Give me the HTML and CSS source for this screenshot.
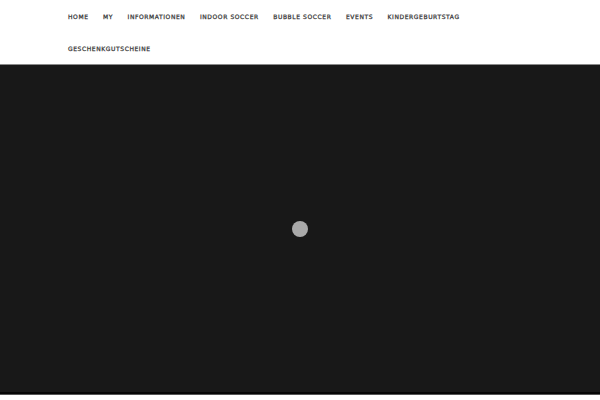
FILE: index.html
```
<!DOCTYPE html>
<html>
<head>
<meta charset="utf-8">
<link rel="stylesheet" href="styles.css">
</head>
<body>
<header class="header">
  <nav class="nav">
    <a class="nav-item">Home</a>
    <a class="nav-item">My</a>
    <a class="nav-item">Informationen</a>
    <a class="nav-item">Indoor Soccer</a>
    <a class="nav-item">Bubble Soccer</a>
    <a class="nav-item">Events</a>
    <a class="nav-item">Kindergeburtstag</a>
    <a class="nav-item">Geschenkgutscheine</a>
  </nav>
</header>
<main class="stage">
  <div class="spinner"></div>
</main>
<div class="footer-line"></div>
</body>
</html>
```
FILE: styles.css
```
html, body {
  margin: 0;
  padding: 0;
  background: #fff;
}
body {
  font-family: "DejaVu Sans", sans-serif;
}
.header {
  box-sizing: border-box;
  height: 65px;
  background: #fff;
  border-bottom: 1px solid #8a8a8a;
}
.nav {
  display: flex;
  flex-wrap: wrap;
  padding: 1px 80px 0 68px;
}
.nav-item {
  display: block;
  height: 32px;
  line-height: 32px;
  margin-right: 14.5px;
  font-size: 6px;
  font-weight: normal;
  letter-spacing: 0.58px;
  text-transform: uppercase;
  color: #333;
  -webkit-text-stroke: 0.25px #3a3a3a;
}
.stage {
  height: 327px;
  background: #181818;
  display: flex;
  align-items: center;
  justify-content: center;
  border-bottom: 2px solid #050505;
}
.spinner {
  width: 16px;
  height: 16px;
  border-radius: 50%;
  background: #a9a9a9;
}
.footer-line {
  height: 1px;
  background: #555;
}
```
